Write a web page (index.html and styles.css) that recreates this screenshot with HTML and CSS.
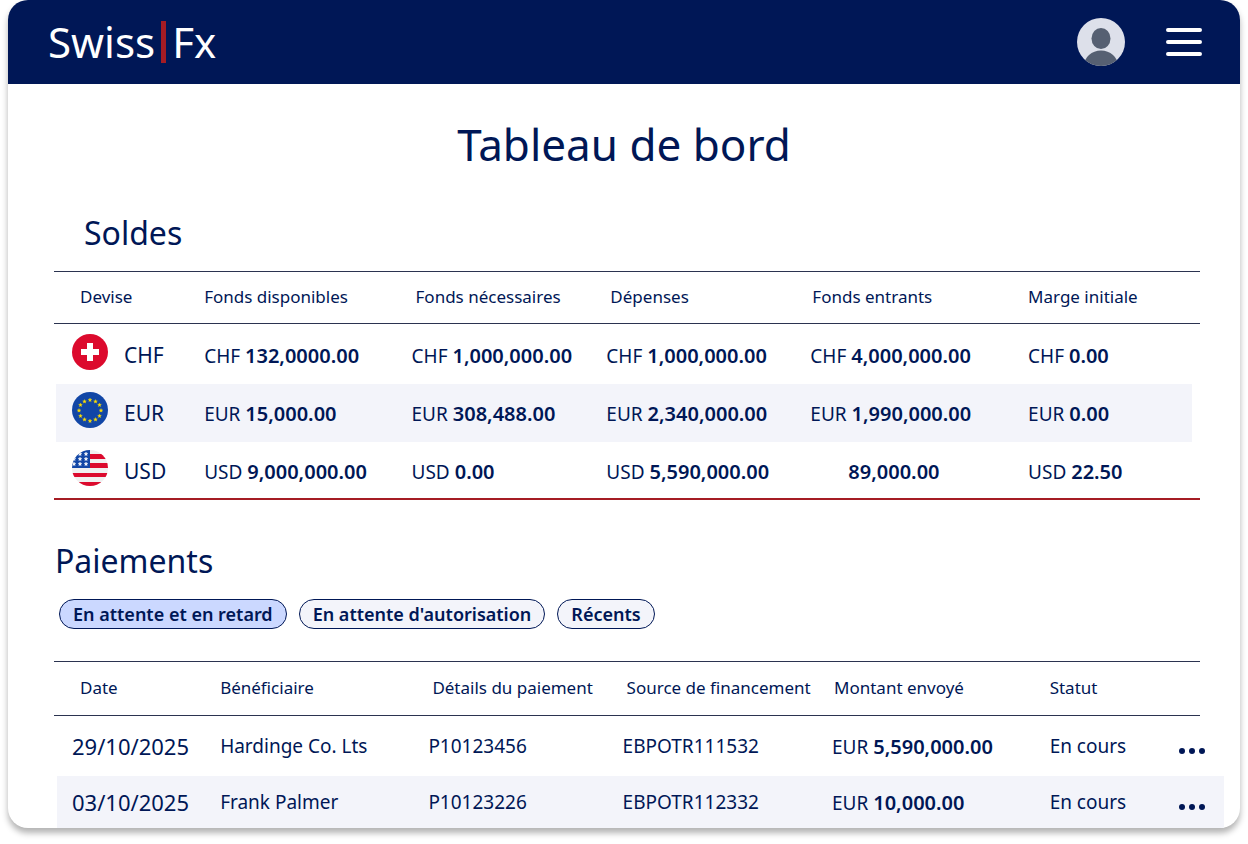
FILE: index.html
```html
<!DOCTYPE html>
<html lang="fr">
<head>
  <meta charset="UTF-8" />
  <meta name="viewport" content="width=device-width, initial-scale=1.0"/>
  <title>Swiss Fx - Tableau de bord</title>
  <link rel="stylesheet" href="styles.css">
</head>
<body>
  <div class="card">
    <header class="topbar">
      <a class="logo" href="#"><span>Swiss</span><span class="logo-bar"></span><span>Fx</span></a>
      <div class="topbar-actions">
        <button class="icon-btn" type="button" aria-label="Mon compte">
          <svg width="48" height="48" viewBox="0 0 48 48">
            <clipPath id="avatarClip"><circle cx="24" cy="24" r="24"/></clipPath>
            <g clip-path="url(#avatarClip)">
              <rect width="48" height="48" fill="#dde0ea"/>
              <ellipse cx="24" cy="20.5" rx="9.5" ry="10.5" fill="#566072"/>
              <ellipse cx="24" cy="48" rx="17" ry="15.5" fill="#566072"/>
            </g>
          </svg>
        </button>
        <button class="icon-btn" type="button" aria-label="Menu">
          <svg width="36" height="30" viewBox="0 0 36 30">
            <path d="M2 3H34M2 15H34M2 27H34" stroke="#fff" stroke-width="4" stroke-linecap="round"/>
          </svg>
        </button>
      </div>
    </header>

    <main>
      <h1>Tableau de bord</h1>

      <section class="soldes">
        <h2>Soldes</h2>
        <table>
          <thead>
            <tr>
              <th class="c-devise">Devise</th>
              <th class="c-dispo">Fonds disponibles</th>
              <th class="c-besoin">Fonds nécessaires</th>
              <th class="c-depense">Dépenses</th>
              <th class="c-entrant">Fonds entrants</th>
              <th class="c-marge">Marge initiale</th>
            </tr>
          </thead>
          <tbody>
            <tr>
              <td>
                <div class="devise">
                  <svg width="36" height="36" viewBox="0 0 36 36">
                    <circle cx="18" cy="18" r="18" fill="#dc0a2d"/>
                    <path d="M15 9h6v6h6v6h-6v6h-6v-6H9v-6h6z" fill="#fff"/>
                  </svg>
                  <span>CHF</span>
                </div>
              </td>
              <td>CHF <b>132,0000.00</b></td>
              <td>CHF <b>1,000,000.00</b></td>
              <td>CHF <b>1,000,000.00</b></td>
              <td>CHF <b>4,000,000.00</b></td>
              <td>CHF <b>0.00</b></td>
            </tr>
            <tr class="alt">
              <td>
                <div class="devise">
                  <svg width="36" height="36" viewBox="0 0 36 36">
                    <defs><path id="star" d="M0-2l.5 1.3 1.4.1-1.1.9.4 1.3L0 .9l-1.2.7.4-1.3-1.1-.9 1.4-.1z"/></defs>
                    <circle cx="18" cy="18" r="18" fill="#1146a6"/>
                    <g fill="#ffe000" stroke="#ffe000" stroke-width=".3">
                      <use href="#star" x="18" y="8"/>
                      <use href="#star" x="23.5" y="9.5"/>
                      <use href="#star" x="27.5" y="13"/>
                      <use href="#star" x="29" y="18.5"/>
                      <use href="#star" x="27.5" y="24"/>
                      <use href="#star" x="23.5" y="27.5"/>
                      <use href="#star" x="18" y="29"/>
                      <use href="#star" x="12.5" y="27.5"/>
                      <use href="#star" x="8.5" y="24"/>
                      <use href="#star" x="7" y="18.5"/>
                      <use href="#star" x="8.5" y="13"/>
                      <use href="#star" x="12.5" y="9.5"/>
                    </g>
                  </svg>
                  <span>EUR</span>
                </div>
              </td>
              <td>EUR <b>15,000.00</b></td>
              <td>EUR <b>308,488.00</b></td>
              <td>EUR <b>2,340,000.00</b></td>
              <td>EUR <b>1,990,000.00</b></td>
              <td>EUR <b>0.00</b></td>
            </tr>
            <tr>
              <td>
                <div class="devise">
                  <svg width="36" height="36" viewBox="0 0 36 36">
                    <clipPath id="usClip"><circle cx="18" cy="18" r="18"/></clipPath>
                    <g clip-path="url(#usClip)">
                      <rect width="36" height="36" fill="#f0f0f0"/>
                      <path d="M18 4h18v5H18zM18 13h18v5H18zM0 23h36v4H0zM0 32h36v4H0z" fill="#dc0a2d"/>
                      <rect width="18" height="18" fill="#1146a6"/>
                      <g fill="#fff" stroke="#fff" stroke-width=".4">
                        <use href="#star" x="8" y="4"/>
                        <use href="#star" x="14" y="4"/>
                        <use href="#star" x="2" y="9"/>
                        <use href="#star" x="8" y="9"/>
                        <use href="#star" x="14" y="9"/>
                        <use href="#star" x="2" y="14"/>
                        <use href="#star" x="8" y="14"/>
                        <use href="#star" x="14" y="14"/>
                      </g>
                    </g>
                  </svg>
                  <span>USD</span>
                </div>
              </td>
              <td>USD <b>9,000,000.00</b></td>
              <td>USD <b>0.00</b></td>
              <td>USD <b>5,590,000.00</b></td>
              <td class="sans-devise"><b>89,000.00</b></td>
              <td>USD <b>22.50</b></td>
            </tr>
          </tbody>
        </table>
      </section>

      <section class="paiements">
        <h2>Paiements</h2>
        <div class="filtres">
          <button class="filtre actif" type="button">En attente et en retard</button>
          <button class="filtre" type="button">En attente d'autorisation</button>
          <button class="filtre" type="button">Récents</button>
        </div>
        <table>
          <thead>
            <tr>
              <th class="p-date">Date</th>
              <th class="p-benef">Bénéficiaire</th>
              <th class="p-details">Détails du paiement</th>
              <th class="p-source">Source de financement</th>
              <th class="p-montant">Montant envoyé</th>
              <th class="p-statut">Statut</th>
              <th class="p-action"></th>
            </tr>
          </thead>
          <tbody>
            <tr>
              <td class="date">29/10/2025</td>
              <td>Hardinge Co. Lts</td>
              <td>P10123456</td>
              <td>EBPOTR111532</td>
              <td>EUR <b>5,590,000.00</b></td>
              <td>En cours</td>
              <td>
                <button class="icon-btn plus" type="button" aria-label="Plus d'options">
                  <svg width="26" height="6" viewBox="0 0 26 6" fill="#001756"><circle cx="3" cy="3" r="3"/><circle cx="13" cy="3" r="3"/><circle cx="23" cy="3" r="3"/></svg>
                </button>
              </td>
            </tr>
            <tr class="alt">
              <td class="date">03/10/2025</td>
              <td>Frank Palmer</td>
              <td>P10123226</td>
              <td>EBPOTR112332</td>
              <td>EUR <b>10,000.00</b></td>
              <td>En cours</td>
              <td>
                <button class="icon-btn plus" type="button" aria-label="Plus d'options">
                  <svg width="26" height="6" viewBox="0 0 26 6" fill="#001756"><circle cx="3" cy="3" r="3"/><circle cx="13" cy="3" r="3"/><circle cx="23" cy="3" r="3"/></svg>
                </button>
              </td>
            </tr>
          </tbody>
        </table>
      </section>
    </main>
  </div>
</body>
</html>
```
FILE: styles.css
```css
:root {
  --navy: #001756;
  --stripe: #f3f4fa;
  --line: #2b3350;
  --red: #a51c24;
}

* {
  box-sizing: border-box;
}

body {
  margin: 0;
  padding: 0 8px 16px;
  height: 100vh;
  background-color: #ffffff;
  color: var(--navy);
  font-family: "Noto Sans", sans-serif;
}

.card {
  height: 100%;
  border-radius: 20px;
  overflow: hidden;
  background-color: #ffffff;
  box-shadow: 0 5px 6px rgba(0, 0, 0, 0.3);
}

.topbar {
  display: flex;
  align-items: center;
  justify-content: space-between;
  height: 84px;
  padding: 0 38px 0 40px;
  background-color: var(--navy);
}

.logo {
  display: flex;
  align-items: center;
  gap: 6px;
  color: #ffffff;
  font-size: 42px;
  line-height: 48px;
  text-decoration: none;
}

.logo-bar {
  width: 5px;
  height: 42px;
  background-color: var(--red);
}

.topbar-actions {
  display: flex;
  align-items: center;
  gap: 41px;
}

.icon-btn {
  display: flex;
  padding: 0;
  border: none;
  background: none;
  cursor: pointer;
}

h1 {
  margin: 30px 0 0;
  font-size: 44px;
  font-weight: 400;
  line-height: 60px;
  text-align: center;
}

h2 {
  margin: 0;
  font-size: 32px;
  font-weight: 400;
  line-height: 44px;
}

/* Tableaux */
table {
  width: 100%;
  border-collapse: separate;
  border-spacing: 0;
  table-layout: fixed;
}

th,
td {
  padding: 0;
  text-align: left;
  white-space: nowrap;
}

th {
  padding-bottom: 3px;
  border-top: 1px solid var(--line);
  border-bottom: 1px solid var(--line);
  font-size: 17px;
  font-weight: 400;
}

td {
  font-size: 19px;
}

b {
  font-size: 20px;
  font-weight: 600;
}

.alt td {
  background-color: var(--stripe);
  background-clip: padding-box;
}

/* Soldes */
.soldes {
  margin: 37px 40px 0 46px;
}

.soldes h2 {
  padding-left: 30px;
  margin-bottom: 16px;
}

.soldes th {
  height: 53px;
}

.soldes td {
  height: 58px;
}

.soldes tr:first-child td {
  height: 60px;
  padding-top: 2px;
}

.soldes tr:last-child td {
  padding-top: 2px;
  border-bottom: 2px solid var(--red);
}

.soldes td:first-child {
  padding-left: 18px;
}

.soldes .alt td:first-child {
  border-left: 2px solid transparent;
  padding-left: 16px;
}

.soldes .alt td:last-child {
  border-right: 8px solid transparent;
}

.devise {
  display: flex;
  align-items: center;
  gap: 16px;
  font-size: 21px;
}

.devise svg {
  margin-bottom: 6px;
}

.soldes .c-devise { width: 13.1%; padding-left: 26px; }
.soldes .c-dispo { width: 18.1%; }
.soldes .c-besoin { width: 17%; padding-left: 4px; }
.soldes .c-depense { width: 17.8%; padding-left: 4px; }
.soldes .c-entrant { width: 19%; padding-left: 2px; }
.soldes .c-marge { width: 15%; }

.soldes .sans-devise {
  padding-left: 38px;
}

/* Paiements */
.paiements {
  margin: 39px 16px 0 46px;
}

.paiements h2 {
  padding-left: 1px;
}

.filtres {
  display: flex;
  gap: 12px;
  margin: 16px 0 32px 5px;
}

.filtre {
  height: 30px;
  padding: 0 13px;
  border: 1px solid var(--navy);
  border-radius: 15px;
  background-color: var(--stripe);
  color: var(--navy);
  font-family: inherit;
  font-size: 18px;
  font-weight: 600;
  line-height: 28px;
  cursor: pointer;
}

.filtre.actif {
  background-color: #cbd8ff;
}

.paiements th {
  height: 55px;
}

.paiements td {
  height: 56px;
  padding-bottom: 4px;
}

.paiements tr:first-child td {
  height: 60px;
  padding-top: 4px;
}

.paiements td:first-child {
  border-left: 3px solid transparent;
  padding-left: 15px;
}

.paiements td.date {
  font-size: 22px;
}

.paiements .p-date { width: 14.2%; padding-left: 26px; }
.paiements .p-benef { width: 17.8%; }
.paiements .p-details { width: 16.6%; padding-left: 4px; }
.paiements .p-source { width: 17.9%; padding-left: 4px; }
.paiements .p-montant { width: 18.6%; padding-left: 2px; }
.paiements .p-statut { width: 11.1%; }

/* les filets s'arrêtent avant la colonne des actions */
.paiements .p-action {
  border: none;
  background:
    linear-gradient(var(--line), var(--line)) left top / calc(100% - 24px) 1px no-repeat,
    linear-gradient(var(--line), var(--line)) left bottom / calc(100% - 24px) 1px no-repeat;
}

.plus {
  padding-top: 9px;
}
```
